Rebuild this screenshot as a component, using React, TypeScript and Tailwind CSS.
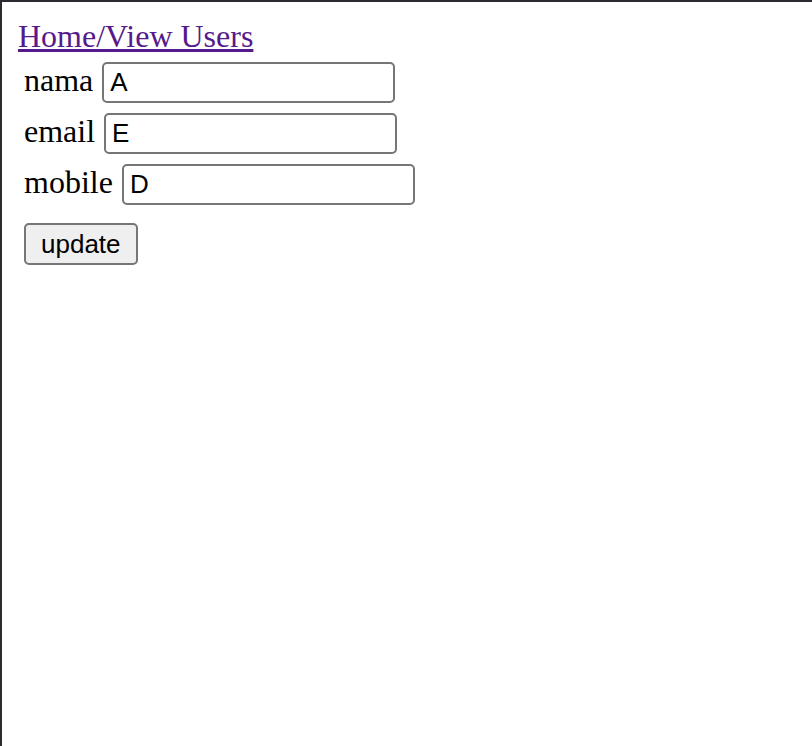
import { useState } from 'react';

const serif = 'font-["Liberation_Serif","Times_New_Roman",serif]';

function Field({ label, value, onChange }: { label: string; value: string; onChange: (v: string) => void }) {
  return (
    <div className="flex h-[41px] items-baseline">
      <span className={`${serif} text-[32px] leading-[37px] text-black`}>{label}</span>
      <input
        value={value}
        onChange={(e) => onChange(e.target.value)}
        className="ml-[9px] h-[41px] w-[293px] rounded-[5px] border-2 border-[#767676] bg-white px-[6px] font-['Liberation_Sans',Arial,sans-serif] text-[26px] text-black outline-none"
      />
    </div>
  );
}

export default function App() {
  const [nama, setNama] = useState('A');
  const [email, setEmail] = useState('E');
  const [mobile, setMobile] = useState('D');

  return (
    <div className="min-h-screen w-full border-l-2 border-t-2 border-[#2b2b31] bg-white pl-4 pt-4">
      <a href="#" className={`${serif} block h-[37px] text-[32px] leading-[37px] text-[#551a8b] underline`}>
        Home/View Users
      </a>
      <form className="flex flex-col items-start pl-[6px] pt-[7px]" onSubmit={(e) => e.preventDefault()}>
        <div className="flex flex-col gap-[10px]">
          <Field label="nama" value={nama} onChange={setNama} />
          <Field label="email" value={email} onChange={setEmail} />
          <Field label="mobile" value={mobile} onChange={setMobile} />
        </div>
        <button
          type="submit"
          className="mt-[18px] h-[42px] rounded-[5px] border-2 border-[#767676] bg-[#efefef] px-[15px] font-['Liberation_Sans',Arial,sans-serif] text-[26px] leading-none text-black"
        >
          update
        </button>
      </form>
    </div>
  );
}
